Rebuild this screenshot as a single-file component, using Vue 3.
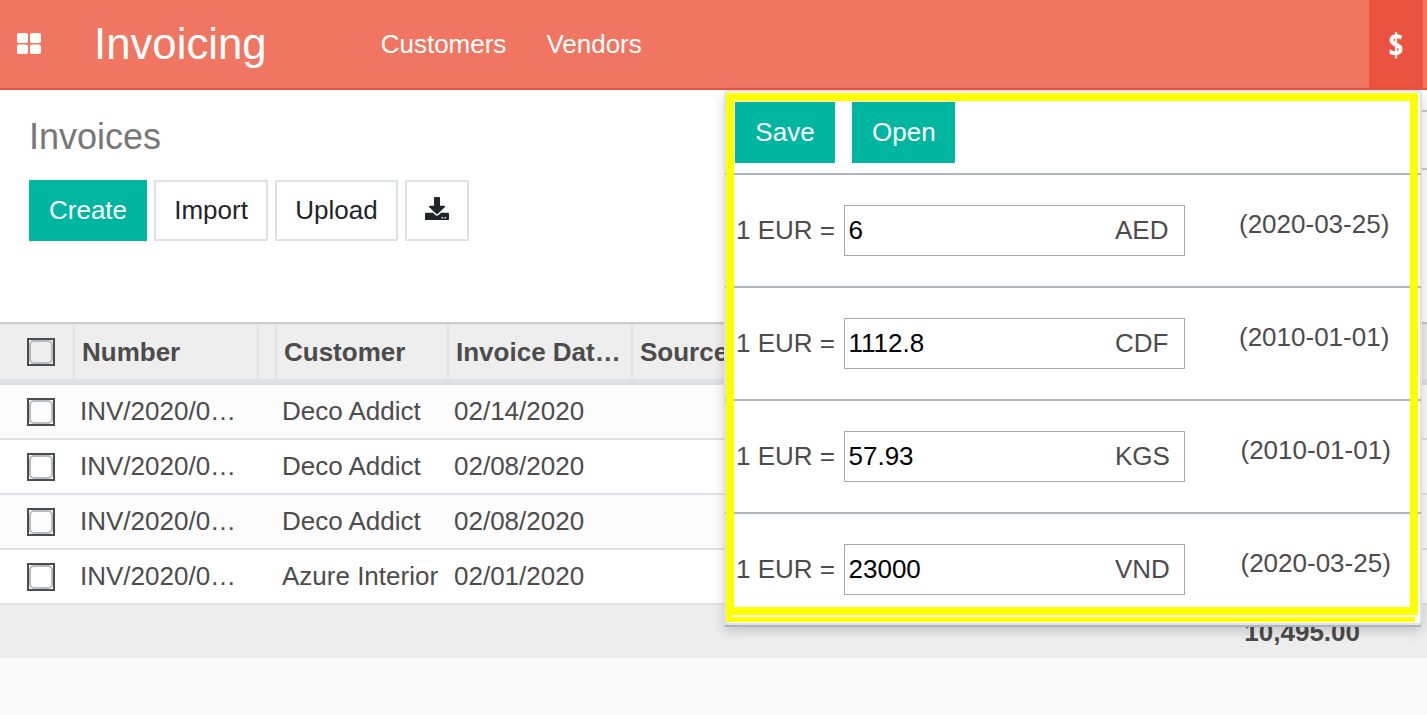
<script setup>
const filas = [
  { numero: 'INV/2020/0…', cliente: 'Deco Addict', fecha: '02/14/2020' },
  { numero: 'INV/2020/0…', cliente: 'Deco Addict', fecha: '02/08/2020' },
  { numero: 'INV/2020/0…', cliente: 'Deco Addict', fecha: '02/08/2020' },
  { numero: 'INV/2020/0…', cliente: 'Azure Interior', fecha: '02/01/2020' },
]

const tasas = [
  { valor: '6', moneda: 'AED', fecha: '(2020-03-25)', ajuste: false },
  { valor: '1112.8', moneda: 'CDF', fecha: '(2010-01-01)', ajuste: false },
  { valor: '57.93', moneda: 'KGS', fecha: '(2010-01-01)', ajuste: true },
  { valor: '23000', moneda: 'VND', fecha: '(2020-03-25)', ajuste: true },
]
</script>

<template>
  <div class="pagina">
    <header class="barra">
      <svg class="apps" viewBox="0 0 24 21" width="24" height="21">
        <rect x="0" y="0" width="11" height="10" rx="2" fill="#fff" />
        <rect x="13" y="0" width="11" height="10" rx="2" fill="#fff" />
        <rect x="0" y="11.5" width="11" height="9.5" rx="2" fill="#fff" />
        <rect x="13" y="11.5" width="11" height="9.5" rx="2" fill="#fff" />
      </svg>
      <span class="marca">Invoicing</span>
      <nav class="menu">
        <a>Customers</a>
        <a>Vendors</a>
      </nav>
      <div class="moneda"><span>$</span></div>
    </header>

    <section class="controles">
      <div class="titulo">
        <h1>Invoices</h1>
        <div class="buscador"></div>
      </div>
      <div class="botones">
        <button class="btn primario">Create</button>
        <button class="btn importar">Import</button>
        <button class="btn subir">Upload</button>
        <button class="btn icono">
          <svg viewBox="0 0 512 512" width="24" height="23" preserveAspectRatio="none">
            <path fill="#212529" d="M216 0h80c13.3 0 24 10.7 24 24v168h87.7c17.8 0 26.7 21.5 14.1 34.1L269.7 378.3c-7.5 7.5-19.8 7.5-27.3 0L90.1 226.1c-12.6-12.6-3.7-34.1 14.1-34.1H192V24c0-13.3 10.7-24 24-24zm296 376v112c0 13.3-10.7 24-24 24H24c-13.3 0-24-10.7-24-24V376c0-13.3 10.7-24 24-24h146.7l49 49c20.1 20.1 52.5 20.1 72.6 0l49-49H488c13.3 0 24 10.7 24 24zm-124 88c0-11-9-20-20-20s-20 9-20 20 9 20 20 20 20-9 20-20zm64 0c0-11-9-20-20-20s-20 9-20 20 9 20 20 20 20-9 20-20z" />
          </svg>
        </button>
      </div>
    </section>

    <div class="tabla">
      <div class="fila cabecera">
        <div class="celda"><span class="check"></span></div>
        <div class="celda">Number</div>
        <div class="celda"></div>
        <div class="celda">Customer</div>
        <div class="celda">Invoice Dat…</div>
        <div class="celda">Source</div>
      </div>
      <div class="fila dato" v-for="(fila, i) in filas" :key="i">
        <div class="celda"><span class="check"></span></div>
        <div class="celda">{{ fila.numero }}</div>
        <div class="celda"></div>
        <div class="celda">{{ fila.cliente }}</div>
        <div class="celda">{{ fila.fecha }}</div>
        <div class="celda"></div>
      </div>
      <div class="pie"><span class="total">10,495.00</span></div>
    </div>

    <div class="panel">
      <div class="acciones">
        <button class="btn primario guardar">Save</button>
        <button class="btn primario abrir">Open</button>
      </div>
      <div class="tasa" v-for="tasa in tasas" :key="tasa.moneda">
        <span class="igual">1 EUR =</span>
        <div class="campo">
          <span class="valor">{{ tasa.valor }}</span>
          <span class="codigo">{{ tasa.moneda }}</span>
        </div>
        <span class="fecha" :class="{ ajuste: tasa.ajuste }">{{ tasa.fecha }}</span>
      </div>
      <div class="marco"></div>
      <div class="marco-pie"></div>
    </div>
  </div>
</template>

<style>
html, body {
  margin: 0;
  background: #f9f9f9;
}
</style>

<style scoped>
.pagina {
  position: relative;
  height: 715px;
  overflow: hidden;
  font-family: "Liberation Sans", Arial, sans-serif;
  font-size: 26px;
  color: #4c4c4c;
  background: #f9f9f9;
}
.barra {
  display: flex;
  align-items: center;
  height: 88px;
  background: #f07662;
  border-bottom: 2px solid #ea5340;
  color: #fff;
}
.apps {
  margin-left: 17px;
  margin-top: -2px;
}
.marca {
  margin-left: 53px;
  font-size: 43.75px;
}
.menu {
  display: flex;
  gap: 40px;
  margin-left: 114px;
}
.moneda {
  align-self: stretch;
  width: 54px;
  margin-left: auto;
  margin-right: 4px;
  display: flex;
  align-items: center;
  justify-content: center;
  background: #ea5340;
  font-family: "Open Sans", sans-serif;
  font-weight: 700;
  font-size: 32px;
}
.moneda span {
  display: block;
  transform: scaleX(0.8);
}
.controles {
  height: 232px;
  padding-left: 29px;
  box-sizing: border-box;
  background: #fff;
}
.titulo {
  display: flex;
  justify-content: space-between;
  height: 90px;
}
.titulo h1 {
  margin: 0;
  padding-top: 26px;
  font-weight: 400;
  font-size: 36px;
  line-height: 42px;
  color: #777;
}
.buscador {
  width: 300px;
  height: 60px;
  margin-top: 20px;
  box-sizing: border-box;
  border-top: 2px solid #ccc;
  border-bottom: 2px solid #ccc;
}
.botones {
  display: flex;
  gap: 7px;
}
.btn {
  height: 61px;
  padding: 0 18px;
  box-sizing: border-box;
  border: 2px solid #dee2e6;
  background: #fff;
  color: #212529;
  font: inherit;
}
.importar {
  width: 114px;
  padding: 0;
}
.subir {
  width: 123px;
  padding: 0;
}
.primario {
  border: 0;
  padding: 0 20px;
  background: #00b6a1;
  color: #fff;
}
.icono {
  width: 64px;
  padding: 0;
}
.icono svg {
  display: block;
  margin: -5px auto 0;
}
.tabla {
  background: #fff;
  border-top: 2px solid #ccc;
}
.fila {
  display: grid;
  grid-template-columns: 73px 184px 18px 172px 184px 1fr;
}
.cabecera {
  height: 54px;
  box-sizing: content-box;
  background: #eee;
  border-top: 1px solid #dee2e6;
  border-bottom: 6px solid #dee2e6;
  font-weight: 700;
}
.cabecera .celda {
  border-left: 2px solid #e2e2e2;
  padding-left: 7px;
}
.cabecera .celda:first-child {
  border-left: 0;
  padding-left: 27px;
}
.dato {
  height: 53px;
  box-sizing: content-box;
  border-bottom: 2px solid #dee2e6;
}
.dato:nth-child(even) {
  background: #fcfcfc;
}
.dato .celda {
  padding-left: 7px;
}
.dato .celda:first-child {
  padding-left: 27px;
}
.celda {
  display: flex;
  align-items: center;
  min-width: 0;
  white-space: nowrap;
  box-sizing: border-box;
}
.check {
  display: block;
  width: 28px;
  height: 28px;
  box-sizing: border-box;
  border: 2px solid #4c4c4c;
  position: relative;
}
.check::after {
  content: "";
  position: absolute;
  inset: 0;
  border: 2px solid #b4bcc4;
  border-radius: 5px;
}
.pie {
  height: 53px;
  background: #ededed;
  display: flex;
  justify-content: flex-end;
  padding-right: 67px;
}
.total {
  font-weight: 700;
  line-height: 55px;
}
.panel {
  position: absolute;
  left: 724px;
  top: 90px;
  width: 698px;
  height: 535px;
  box-sizing: border-box;
  background: #fff;
  border: 2px solid #dee2e6;
  border-radius: 5px;
  box-shadow: 0 6px 12px rgba(0, 0, 0, 0.175);
}
.acciones {
  height: 83px;
  box-sizing: border-box;
  margin: 0 -1px;
  padding: 10px 0 0 10px;
  display: flex;
  gap: 17px;
  border-bottom: 2px solid #adb5bd;
}
.guardar {
  width: 100px;
}
.abrir {
  width: 103px;
}
.tasa {
  height: 113px;
  box-sizing: border-box;
  display: flex;
  align-items: flex-start;
  margin: 0 -1px;
  padding: 30px 0 0 11px;
  border-bottom: 2px solid #adb5bd;
}
.tasa:last-of-type {
  border-bottom: 0;
}
.igual {
  width: 108px;
  line-height: 51px;
  white-space: nowrap;
}
.campo {
  width: 341px;
  height: 51px;
  box-sizing: border-box;
  border: 1px solid #a9a9a9;
  display: flex;
  align-items: center;
  padding: 0 15px 0 3.5px;
}
.valor {
  color: #000;
}
.codigo {
  width: 54px;
  margin-left: auto;
  white-space: nowrap;
}
.fecha {
  margin-left: 54px;
  line-height: 38px;
}
.fecha.ajuste {
  margin-left: 55.5px;
}
.marco {
  position: absolute;
  left: 0;
  top: 1px;
  width: 692px;
  height: 522px;
  box-sizing: border-box;
  border: 8px solid #ff0;
}
.marco-pie {
  position: absolute;
  left: 0;
  top: 523px;
  width: 689px;
  height: 7px;
  box-sizing: border-box;
  border-left: 6px solid #ff0;
  border-bottom: 5px solid #ff0;
}
</style>
